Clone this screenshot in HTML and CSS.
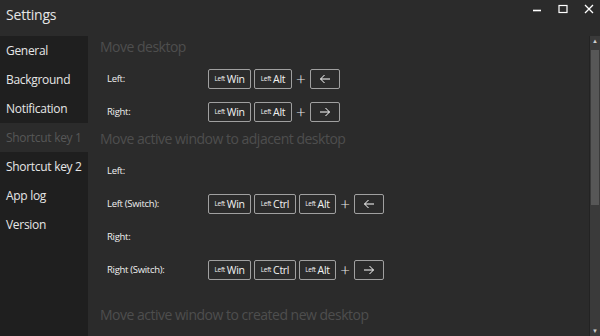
FILE: index.html
```html
<!DOCTYPE html>
<html lang="en">
<head>
    <meta charset="UTF-8">
    <title>Settings</title>
    <link rel="stylesheet" href="styles.css">
</head>
<body>
<div class="window">
    <div class="titlebar">
        <div class="title">Settings</div>
        <div class="controls">
            <span class="ctrl">
                <svg width="10" height="10" viewBox="0 0 10 10"><path d="M1 6.5h8" stroke="#fff" stroke-width="1.6"/></svg>
            </span>
            <span class="ctrl">
                <svg width="10" height="10" viewBox="0 0 10 10"><rect x="1" y="1.5" width="8" height="7" fill="none" stroke="#fff" stroke-width="1.2"/></svg>
            </span>
            <span class="ctrl">
                <svg width="10" height="10" viewBox="0 0 10 10"><path d="M1 1l8 8M9 1l-8 8" stroke="#fff" stroke-width="1.3"/></svg>
            </span>
        </div>
    </div>
    <div class="main">
        <div class="sidebar">
            <div class="nav-item">General</div>
            <div class="nav-item">Background</div>
            <div class="nav-item">Notification</div>
            <div class="nav-item active">Shortcut key 1</div>
            <div class="nav-item">Shortcut key 2</div>
            <div class="nav-item">App log</div>
            <div class="nav-item">Version</div>
        </div>
        <div class="content">
            <div class="section">
                <div class="section-title">Move desktop</div>
                <div class="row">
                    <div class="label">Left:</div>
                    <div class="keys">
                        <span class="key"><small>Left</small>Win</span>
                        <span class="key"><small>Left</small>Alt</span>
                        <span class="plus">+</span>
                        <span class="key arrow"><svg width="12" height="10" viewBox="0 0 12 10"><path d="M11 5H1.5M5.5 1L1.5 5l4 4" fill="none" stroke="#fff" stroke-width="1"/></svg></span>
                    </div>
                </div>
                <div class="row">
                    <div class="label">Right:</div>
                    <div class="keys">
                        <span class="key"><small>Left</small>Win</span>
                        <span class="key"><small>Left</small>Alt</span>
                        <span class="plus">+</span>
                        <span class="key arrow"><svg width="12" height="10" viewBox="0 0 12 10"><path d="M1 5h9.5M6.5 1l4 4-4 4" fill="none" stroke="#fff" stroke-width="1"/></svg></span>
                    </div>
                </div>
            </div>
            <div class="section">
                <div class="section-title">Move active window to adjacent desktop</div>
                <div class="row">
                    <div class="label">Left:</div>
                </div>
                <div class="row">
                    <div class="label">Left (Switch):</div>
                    <div class="keys">
                        <span class="key"><small>Left</small>Win</span>
                        <span class="key"><small>Left</small>Ctrl</span>
                        <span class="key"><small>Left</small>Alt</span>
                        <span class="plus">+</span>
                        <span class="key arrow"><svg width="12" height="10" viewBox="0 0 12 10"><path d="M11 5H1.5M5.5 1L1.5 5l4 4" fill="none" stroke="#fff" stroke-width="1"/></svg></span>
                    </div>
                </div>
                <div class="row">
                    <div class="label">Right:</div>
                </div>
                <div class="row">
                    <div class="label">Right (Switch):</div>
                    <div class="keys">
                        <span class="key"><small>Left</small>Win</span>
                        <span class="key"><small>Left</small>Ctrl</span>
                        <span class="key"><small>Left</small>Alt</span>
                        <span class="plus">+</span>
                        <span class="key arrow"><svg width="12" height="10" viewBox="0 0 12 10"><path d="M1 5h9.5M6.5 1l4 4-4 4" fill="none" stroke="#fff" stroke-width="1"/></svg></span>
                    </div>
                </div>
            </div>
            <div class="section spaced">
                <div class="section-title">Move active window to created new desktop</div>
                <div class="row">
                    <div class="label"></div>
                    <div class="keys">
                        <span class="key blank wide"></span>
                        <span class="key blank"></span>
                        <span class="key blank"></span>
                    </div>
                </div>
            </div>
        </div>
        <div class="scrollbar">
            <div class="scroll-btn">&#9650;</div>
            <div class="track"><div class="thumb"></div></div>
            <div class="scroll-btn">&#9660;</div>
        </div>
    </div>
</div>
</body>
</html>
```

FILE: styles.css
```css
:root {
    --bg: #2b2b2b;
    --side: #1f1f1f;
    --text: #e6e6e6;
    --dim: #4e4e4e;
    --key-border: #a0a0a0;
}

html, body {
    margin: 0;
    padding: 0;
    background: var(--bg);
    font-family: 'Open Sans', 'Noto Sans', sans-serif;
    color: var(--text);
}

.window {
    width: 600px;
    height: 336px;
    display: flex;
    flex-direction: column;
    overflow: hidden;
}

.titlebar {
    height: 34px;
    flex: none;
    display: flex;
    align-items: flex-start;
    justify-content: space-between;
    background: var(--bg);
}

.title {
    font-size: 14px;
    padding: 5px 0 0 6px;
    letter-spacing: -0.2px;
}

.controls {
    display: flex;
    gap: 16px;
    padding: 4px 6px 0 0;
}

.ctrl {
    width: 10px;
    height: 10px;
    display: flex;
}

.main {
    flex: 1;
    display: flex;
    min-height: 0;
    padding-top: 2px;
}

.sidebar {
    width: 88px;
    flex: none;
    background: var(--side);
}

.nav-item {
    height: 29px;
    line-height: 29px;
    padding-left: 6px;
    font-size: 12px;
    letter-spacing: -0.3px;
    white-space: nowrap;
}

.nav-item.active {
    background: var(--bg);
    color: #575757;
}

.content {
    flex: 1;
    padding-left: 12px;
    overflow: hidden;
}

.section-title {
    height: 22px;
    line-height: 22px;
    font-size: 14px;
    color: var(--dim);
    letter-spacing: -0.5px;
    white-space: nowrap;
    margin-bottom: 4px;
}

.section.spaced {
    margin-top: 18px;
}

.row {
    height: 33px;
    display: flex;
    align-items: center;
    padding-left: 7px;
}

.label {
    width: 101px;
    flex: none;
    font-size: 9.5px;
    font-weight: 500;
    letter-spacing: -0.3px;
    color: #f0f0f0;
}

.keys {
    display: flex;
    align-items: center;
    gap: 3px;
}

.key {
    height: 18px;
    padding: 0 5.5px;
    border: 1px solid var(--key-border);
    border-radius: 2px;
    display: flex;
    align-items: center;
    font-size: 10.5px;
    letter-spacing: -0.3px;
    color: #f2f2f2;
    white-space: nowrap;
}

.key small {
    font-size: 6.5px;
    margin-right: 2px;
}

.key.arrow {
    width: 18px;
    padding: 0 5px;
    justify-content: center;
}

.key.blank {
    width: 28px;
}

.key.blank.wide {
    width: 31px;
}

.plus {
    font-size: 17px;
    font-weight: 300;
    width: 12px;
    text-align: center;
    line-height: 18px;
}

.scrollbar {
    width: 10px;
    flex: none;
    background: #3a3a3a;
    border-left: 1px solid #232323;
    display: flex;
    flex-direction: column;
}

.scroll-btn {
    height: 10px;
    font-size: 6px;
    text-align: center;
    line-height: 10px;
    color: #cfcfcf;
}

.track {
    flex: 1;
    padding: 4px 1px;
}

.thumb {
    height: 155px;
    background: #575757;
}
```
